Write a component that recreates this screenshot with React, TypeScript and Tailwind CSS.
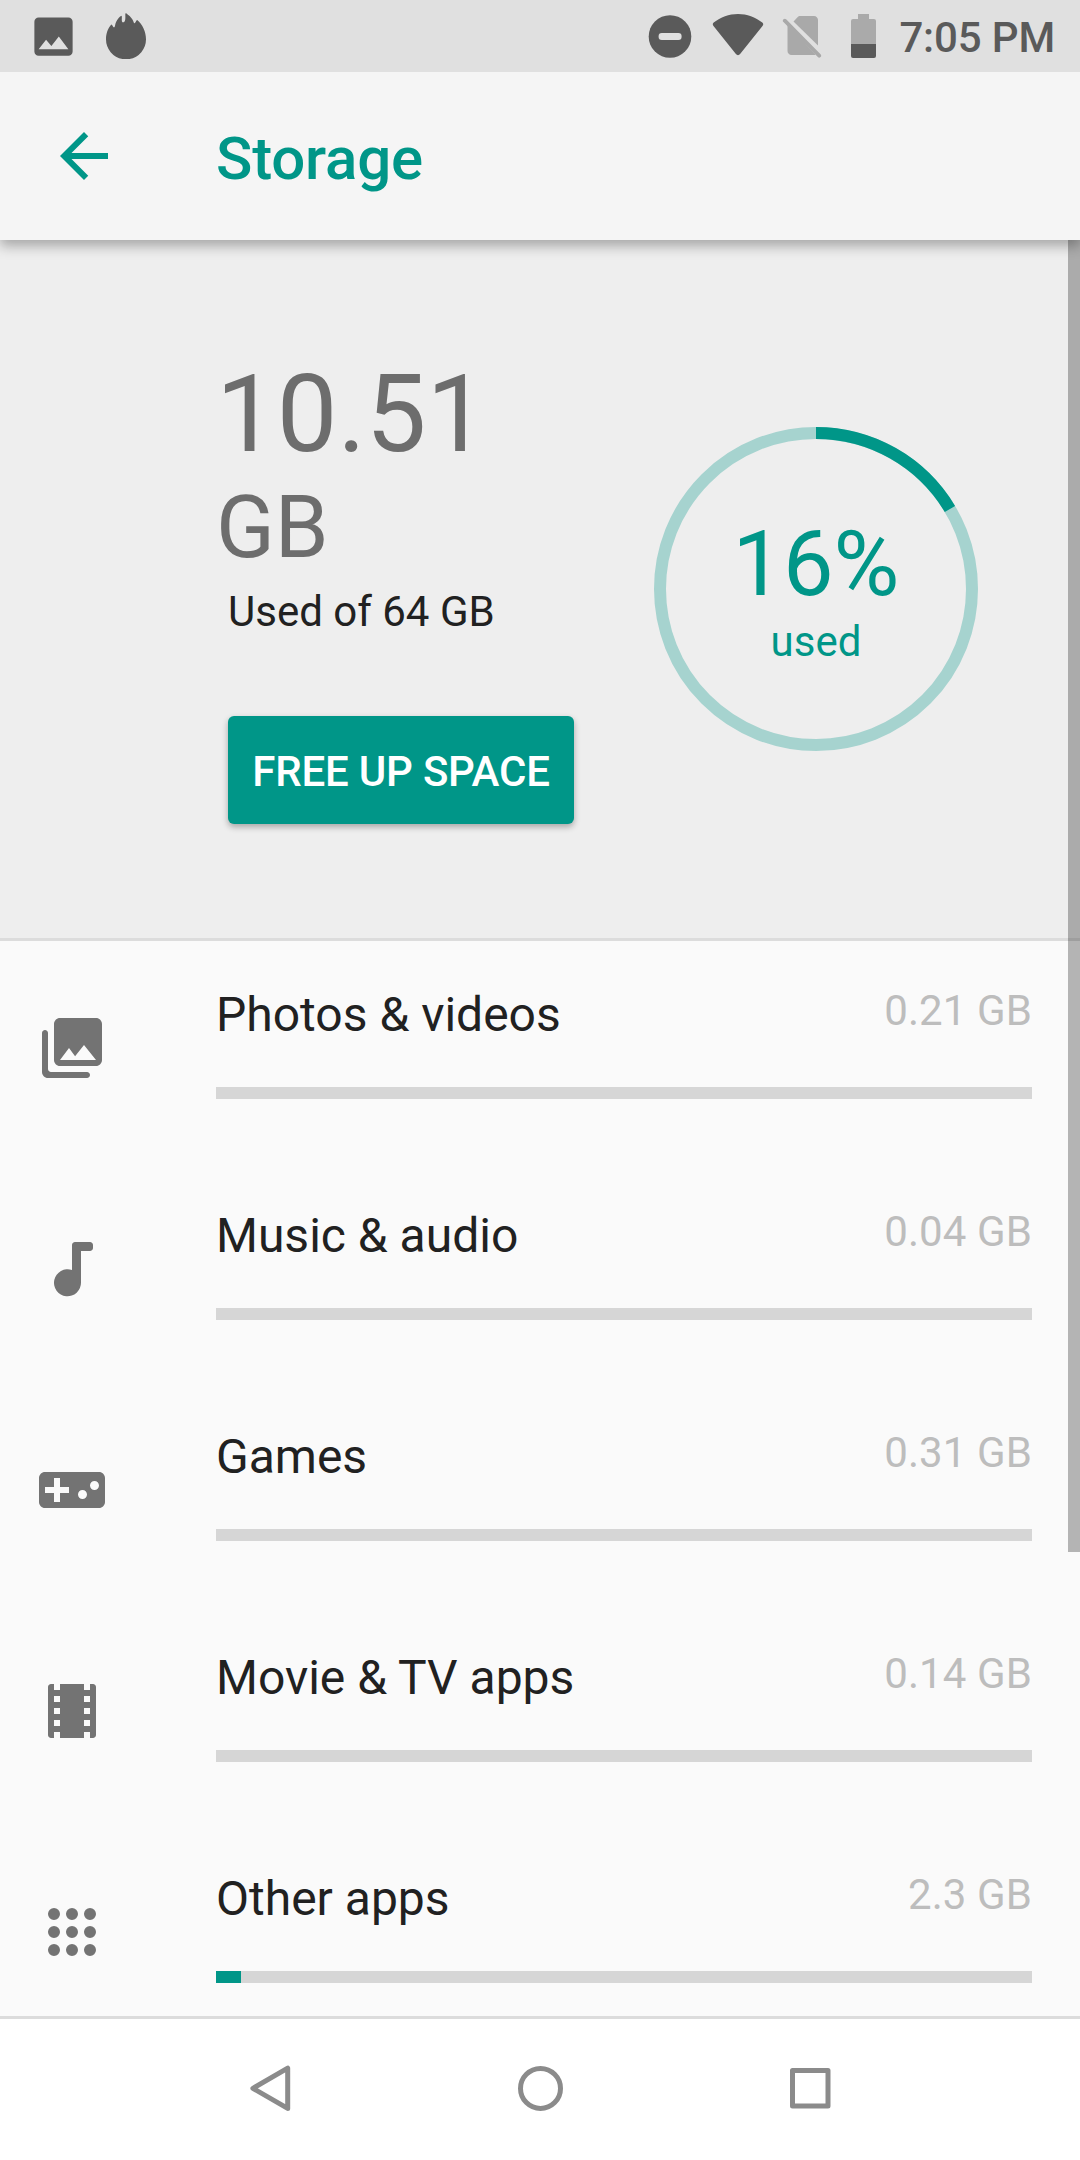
import type { ReactNode } from "react";

function MaterialIcon({ d, className }: { d: string; className: string }) {
  return (
    <svg viewBox="0 0 24 24" fill="currentColor" className={className}>
      <path d={d} fillRule="evenodd" />
    </svg>
  );
}

const icons = {
  image:
    "M21 19V5c0-1.1-.9-2-2-2H5c-1.1 0-2 .9-2 2v14c0 1.1.9 2 2 2h14c1.1 0 2-.9 2-2zM8.5 13.5l2.5 3.01L14.5 12l4.5 6H5l3.5-4.5z",
  back: "M20 11H7.83l5.59-5.59L12 4l-8 8 8 8 1.41-1.41L7.83 13H20v-2z",
  photos:
    "M22 16V4c0-1.1-.9-2-2-2H8c-1.1 0-2 .9-2 2v12c0 1.1.9 2 2 2h12c1.1 0 2-.9 2-2zM11 12l2.03 2.71L16 11l4 5H8l3-4zM2 7v13c0 1.1.9 2 2 2h13c.55 0 1-.45 1-1s-.45-1-1-1H5c-.55 0-1-.45-1-1V7c0-.55-.45-1-1-1s-1 .45-1 1z",
  music:
    "M12 4v8.34A4.5 4.5 0 1 0 15 16.5V6h3c.55 0 1-.45 1-1V4c0-.55-.45-1-1-1h-5c-.55 0-1 .45-1 1z",
  games:
    "M21 6H3c-1.1 0-2 .9-2 2v8c0 1.1.9 2 2 2h18c1.1 0 2-.9 2-2V8c0-1.1-.9-2-2-2zM11 13H8v3H6v-3H3v-2h3V8h2v3h3v2zM15.5 15c-.83 0-1.5-.67-1.5-1.5s.67-1.5 1.5-1.5 1.5.67 1.5 1.5-.67 1.5-1.5 1.5zM19.5 12c-.83 0-1.5-.67-1.5-1.5S18.67 9 19.5 9s1.5.67 1.5 1.5-.67 1.5-1.5 1.5z",
  movies:
    "M18 3v2h-2V3H8v2H6V3H5c-.55 0-1 .45-1 1v16c0 .55.45 1 1 1h1v-2h2v2h8v-2h2v2h1c.55 0 1-.45 1-1V4c0-.55-.45-1-1-1h-1zM8 17H6v-2h2v2zM8 13H6v-2h2v2zM8 9H6V7h2v2zM18 17h-2v-2h2v2zM18 13h-2v-2h2v2zM18 9h-2V7h2v2z",
  apps:
    "M4 6a2 2 0 1 0 4 0a2 2 0 1 0-4 0zM10 6a2 2 0 1 0 4 0a2 2 0 1 0-4 0zM16 6a2 2 0 1 0 4 0a2 2 0 1 0-4 0zM4 12a2 2 0 1 0 4 0a2 2 0 1 0-4 0zM10 12a2 2 0 1 0 4 0a2 2 0 1 0-4 0zM16 12a2 2 0 1 0 4 0a2 2 0 1 0-4 0zM4 18a2 2 0 1 0 4 0a2 2 0 1 0-4 0zM10 18a2 2 0 1 0 4 0a2 2 0 1 0-4 0zM16 18a2 2 0 1 0 4 0a2 2 0 1 0-4 0z",
};

const categories = [
  { name: "Photos & videos", size: "0.21 GB", icon: icons.photos, percent: 0 },
  { name: "Music & audio", size: "0.04 GB", icon: icons.music, percent: 0 },
  { name: "Games", size: "0.31 GB", icon: icons.games, percent: 0 },
  { name: "Movie & TV apps", size: "0.14 GB", icon: icons.movies, percent: 0 },
  { name: "Other apps", size: "2.3 GB", icon: icons.apps, percent: 3.06 },
];

function StatusBar() {
  return (
    <header className="z-20 flex h-[72px] shrink-0 items-center bg-[#e0e0e0] pr-[25px] pl-[28px] text-[#5a5a5a]">
      <MaterialIcon d={icons.image} className="size-[51px]" />
      <svg viewBox="0 0 42 48" className="ml-[26px] h-[48px] w-[42px]" fill="currentColor">
        <path d="M21.2 1.2C23.5 3 26 5 27.3 7.2C28.7 9.4 28.8 11.5 29.6 11.2C30.8 10.6 31 8.2 32.2 8C37.5 12.5 41 19.5 41 27.3A20 20 0 0 1 24.5 47H17.5A20 20 0 0 1 1 27.3C1 21.7 3 16 6.3 12.6C7.5 12.6 7.6 15.2 9 15.4C10.4 15 9.7 12.5 11.2 9.8C12.7 7 14.5 4.5 16.6 3.8C17.4 5.5 15.9 10.2 18 10.4C21 10.2 20.3 5.5 20.3 1.5Z" />
      </svg>
      <svg viewBox="0 0 44 44" className="ml-auto size-[44px]">
        <circle cx="22" cy="22.5" r="21.3" fill="#5a5a5a" />
        <rect x="10.6" y="19" width="23" height="7" rx="3.2" fill="#e0e0e0" />
      </svg>
      <svg viewBox="0 0 52 44" className="ml-[20px] h-[44px] w-[52px]" fill="currentColor">
        <path d="M1.7 8.6C8.5 3.2 17 0 26 0S43.5 3.2 50.3 8.6C51.4 9.5 51.5 10.7 50.7 11.7L28.1 40.1C27 41.5 25 41.5 23.9 40.1L1.3 11.7C.5 10.7 .6 9.5 1.7 8.6Z" />
      </svg>
      <svg viewBox="0 0 40 44" className="ml-[18px] h-[44px] w-[40px]" fill="#a9a9a9">
        <path d="M11.5 7.5L15.5 3.2C16.3 2.4 17 2 18.2 2H32C34.2 2 36 3.8 36 6V31.5Z" />
        <path d="M5.5 10.5L33.5 40.4C33 40.8 32.5 41 32 41H9.5C7.3 41 5.5 39.2 5.5 37Z" />
        <path d="M2.8 6.7L37.2 41.7" stroke="#a9a9a9" strokeWidth="3.8" strokeLinecap="round" />
      </svg>
      <svg viewBox="0 0 25 44" className="ml-[29px] h-[44px] w-[25px]">
        <path d="M7 0H18V5H23Q25 5 25 7V30H0V7Q0 5 2 5H7Z" fill="#aaaaaa" />
        <path d="M0 30H25V42Q25 44 23 44H2Q0 44 0 42Z" fill="#5a5a5a" />
      </svg>
      <span className="ml-[23px] pt-[3px] text-[42px] leading-[48px] font-medium tracking-[-0.15px]">7:05 PM</span>
    </header>
  );
}

function AppBar() {
  return (
    <div className="z-10 flex h-[168px] shrink-0 items-center bg-[#f5f5f5] pl-[48px] text-[#009688] shadow-[0_6px_12px_rgba(0,0,0,0.3)]">
      <MaterialIcon d={icons.back} className="size-[72px]" />
      <h1 className="ml-[96px] pt-[6px] text-[60px] leading-[70px] font-medium tracking-[-0.2px]">Storage</h1>
    </div>
  );
}

function UsageRing() {
  const radius = 156;
  const length = 2 * Math.PI * radius;
  return (
    <div className="relative mt-[187px] mr-[102px] size-[324px]">
      <svg viewBox="0 0 324 324" fill="none" strokeWidth="12" className="absolute inset-0 -rotate-90">
        <circle cx="162" cy="162" r={radius} stroke="#a6d3cf" />
        <circle
          cx="162"
          cy="162"
          r={radius}
          stroke="#009688"
          strokeDasharray={`${(length * 10.51) / 64} ${length}`}
        />
      </svg>
      <div className="flex flex-col items-center pt-[85px] text-[#009688]">
        <span className="text-[90px] leading-[106px]">16%</span>
        <span className="text-[42px] leading-[48px]">used</span>
      </div>
    </div>
  );
}

function Summary() {
  return (
    <section className="flex h-[701px] shrink-0 justify-between border-b-[3px] border-[#dcdcdc] bg-[#eeeeee] pl-[216px]">
      <div className="flex flex-col items-start pt-[111px]">
        <span className="text-[108px] leading-[126px] text-[#6d6d6d]">10.51</span>
        <span className="mt-[1px] text-[86.4px] leading-[100px] text-[#6d6d6d]">GB</span>
        <span className="mt-[10px] ml-[12px] text-[42px] leading-[48px] text-[#212121]">Used of 64 GB</span>
        <button className="mt-[80px] ml-[12px] flex h-[108px] w-[346px] items-center justify-center rounded-[6px] bg-[#009688] pt-[4px] text-[42px] leading-[48px] font-medium tracking-[-0.2px] whitespace-nowrap text-white shadow-[0_3px_6px_rgba(0,0,0,0.3)]">
          FREE UP SPACE
        </button>
      </div>
      <UsageRing />
    </section>
  );
}

function CategoryRow({ name, size, icon, percent }: (typeof categories)[number]) {
  return (
    <li className="flex h-[221px] shrink-0 pr-[48px] pl-[36px]">
      <MaterialIcon d={icon} className="mt-[71px] size-[72px] shrink-0 text-[#737373]" />
      <div className="ml-[108px] flex-1 pt-[46px]">
        <div className="flex items-start justify-between">
          <span className="text-[48px] leading-[56px] text-[#212121]">{name}</span>
          <span className="text-[42px] leading-[48px] tracking-[0.1px] text-[#bdbdbd]">{size}</span>
        </div>
        <div className="mt-[44px] h-[12px] bg-[#d6d6d6]">
          <div className="h-full bg-[#009688]" style={{ width: `${percent}%` }} />
        </div>
      </div>
    </li>
  );
}

function NavButton({ children }: { children: ReactNode }) {
  return (
    <svg
      viewBox="0 0 60 60"
      className="size-[60px]"
      fill="none"
      stroke="#8b8b8b"
      strokeWidth="5"
      strokeLinejoin="round"
    >
      {children}
    </svg>
  );
}

export default function App() {
  return (
    <div className="flex h-[2160px] w-[1080px] flex-col overflow-hidden bg-[#fafafa] font-[Roboto,sans-serif]">
      <StatusBar />
      <AppBar />
      <main className="relative flex h-[1776px] shrink-0 flex-col overflow-hidden">
        <Summary />
        <ul className="flex flex-col">
          {categories.map((category) => (
            <CategoryRow key={category.name} {...category} />
          ))}
        </ul>
        <div className="absolute top-0 right-0 h-[1312px] w-[12px] bg-black/28" />
      </main>
      <nav className="flex h-[144px] shrink-0 items-center justify-center gap-[210px] border-t-[3px] border-[#dcdcdc] bg-white pb-[3px]">
        <NavButton>
          <path d="M12.9 30.3L47.7 10.2V50.4Z" />
        </NavButton>
        <NavButton>
          <circle cx="30.5" cy="30.4" r="20" />
        </NavButton>
        <NavButton>
          <rect x="12.5" y="12.5" width="35.5" height="35.5" />
        </NavButton>
      </nav>
    </div>
  );
}
